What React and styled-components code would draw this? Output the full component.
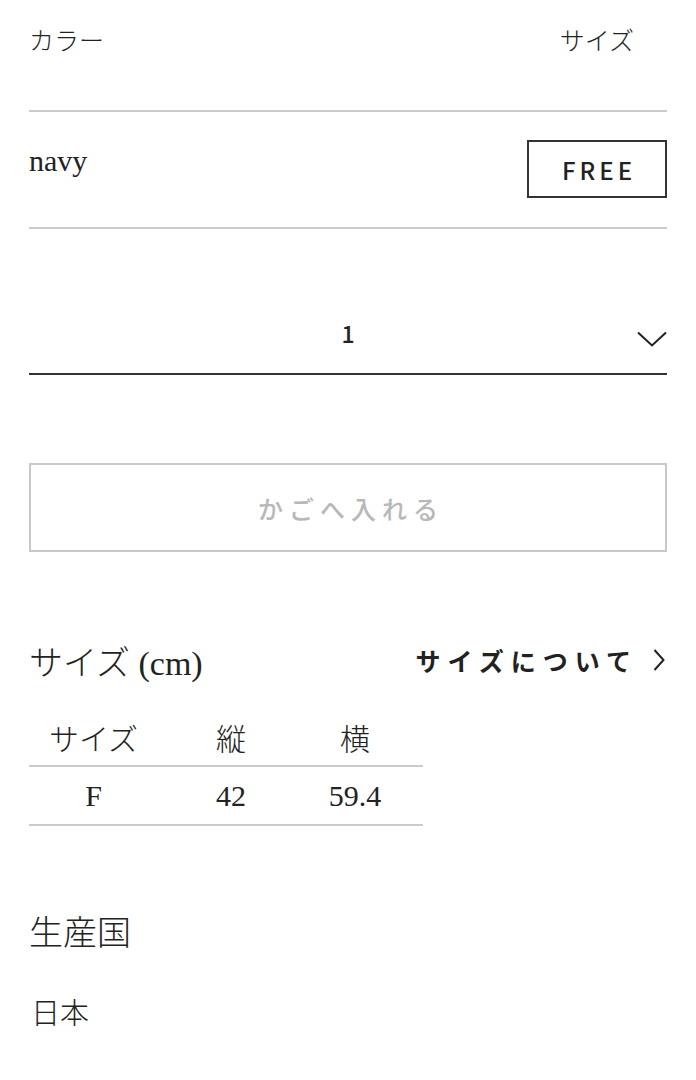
import React from 'react';
import styled, { createGlobalStyle } from 'styled-components';

const serif = `"Liberation Serif", "Noto Sans CJK JP", serif`;
const sans = `"Noto Sans CJK JP", "Noto Sans", sans-serif`;

const GlobalStyle = createGlobalStyle`
  html, body {
    margin: 0;
    padding: 0;
    background: #fff;
  }
  body {
    font-family: ${serif};
    color: #222;
  }
`;

const Page = styled.div`
  width: 696px;
  padding: 0 29px;
  box-sizing: border-box;
`;

const OptionHead = styled.div`
  display: flex;
  justify-content: space-between;
  align-items: center;
  height: 112px;
  padding-bottom: 32px;
  box-sizing: border-box;
  border-bottom: 2px solid #cbcbcb;
  font-size: 25px;
  font-weight: 300;
`;

const OptionBody = styled.div`
  display: flex;
  justify-content: space-between;
  align-items: center;
  height: 117px;
  box-sizing: border-box;
  border-bottom: 2px solid #cbcbcb;
`;

const SizeLabel = styled.span`
  width: 140px;
  text-align: center;
`;

const ColorName = styled.span`
  font-size: 30px;
  margin-top: -18px;
`;

const SizeChip = styled.div`
  width: 140px;
  height: 58px;
  box-sizing: border-box;
  border: 2px solid #333;
  display: flex;
  align-items: center;
  justify-content: center;
  font-family: ${sans};
  font-size: 24px;
  font-weight: 500;
  letter-spacing: 4px;
  padding-left: 4px;
  margin-top: -1px;
`;

const Select = styled.div`
  position: relative;
  height: 146px;
  box-sizing: border-box;
  border-bottom: 2px solid #333;
  display: flex;
  align-items: center;
  justify-content: center;
  padding-top: 64px;
  font-family: ${sans};
  font-size: 23px;
  font-weight: 500;
`;

const Chevron = styled.svg`
  position: absolute;
  right: 0;
  top: 102px;
`;

const CartButton = styled.button`
  display: flex;
  align-items: center;
  justify-content: center;
  width: 100%;
  height: 89px;
  margin-top: 88px;
  background: #fff;
  border: 2px solid #c8c8c8;
  color: #b8b8b8;
  font-family: ${sans};
  font-size: 25px;
  font-weight: 500;
  letter-spacing: 6px;
  padding: 0 0 0 6px;
`;

const SectionHead = styled.div`
  display: flex;
  justify-content: space-between;
  align-items: center;
  margin-top: 86px;
  height: 44px;
`;

const SectionTitle = styled.h2`
  margin: 0;
  font-family: ${serif};
  font-size: ${(p) => p.$size || 34}px;
  font-weight: 300;
`;

const SizeLink = styled.a`
  display: flex;
  align-items: center;
  gap: 15px;
  font-family: ${sans};
  font-size: 25px;
  font-weight: 700;
  letter-spacing: 7px;
  color: #222;
  text-decoration: none;
  margin-right: 2px;
`;

const Table = styled.div`
  width: 394px;
  margin-top: 27px;
`;

const Row = styled.div`
  display: grid;
  grid-template-columns: 129px 146px 102px;
  align-items: center;
  height: ${(p) => p.$h}px;
  border-bottom: 2px solid #cbcbcb;
  font-size: 30px;
  font-weight: 300;
`;

const Cell = styled.span`
  text-align: center;
`;

const Origin = styled.div`
  margin-top: 80px;
`;

const OriginValue = styled.p`
  margin: 35px 0 0 2px;
  font-size: 29px;
  font-weight: 300;
`;

export default function App() {
  return (
    <>
      <GlobalStyle />
      <Page>
        <OptionHead>
          <span>カラー</span>
          <SizeLabel>サイズ</SizeLabel>
        </OptionHead>
        <OptionBody>
          <ColorName>navy</ColorName>
          <SizeChip>FREE</SizeChip>
        </OptionBody>
        <Select>
          1
          <Chevron width="30" height="16" viewBox="0 0 30 16">
            <polyline points="1,1.5 15,14.5 29,1.5" fill="none" stroke="#222" strokeWidth="2" />
          </Chevron>
        </Select>
        <CartButton>かごへ入れる</CartButton>
        <SectionHead>
          <SectionTitle>サイズ (cm)</SectionTitle>
          <SizeLink href="#">
            <span>サイズについて</span>
            <svg width="12" height="22" viewBox="0 0 12 22">
              <polyline points="1.5,1 10.5,11 1.5,21" fill="none" stroke="#222" strokeWidth="2" />
            </svg>
          </SizeLink>
        </SectionHead>
        <Table>
          <Row $h={56}>
            <Cell>サイズ</Cell>
            <Cell>縦</Cell>
            <Cell>横</Cell>
          </Row>
          <Row $h={57}>
            <Cell>F</Cell>
            <Cell>42</Cell>
            <Cell>59.4</Cell>
          </Row>
        </Table>
        <Origin>
          <SectionTitle $size={34}>生産国</SectionTitle>
          <OriginValue>日本</OriginValue>
        </Origin>
      </Page>
    </>
  );
}
